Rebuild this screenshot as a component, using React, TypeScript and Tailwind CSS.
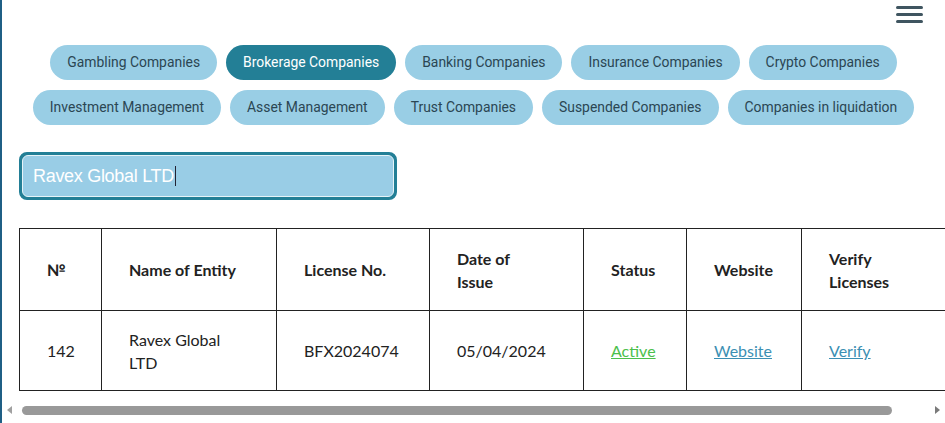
import React from "react";

const row1 = ["Gambling Companies", "Brokerage Companies", "Banking Companies", "Insurance Companies", "Crypto Companies"];
const row2 = ["Investment Management", "Asset Management", "Trust Companies", "Suspended Companies", "Companies in liquidation"];

function Pill({ label }: { label: string }) {
  const active = label === "Brokerage Companies";
  return (
    <div
      className={
        "h-[35px] px-[17px] rounded-full flex items-center text-[13.9px] whitespace-nowrap " +
        (active ? "bg-[#237f96] text-white" : "bg-[#99cee5] text-[#2b4653]")
      }
    >
      {label}
    </div>
  );
}

export default function App() {
  return (
    <div className="w-[945px] h-[423px] bg-white border-l-2 border-[#1f5f85] overflow-hidden relative" style={{ fontFamily: "Roboto, 'Liberation Sans', sans-serif" }}>
      <div className="flex justify-end pr-[22px] pt-[6px] h-[45px]">
        <div className="flex flex-col gap-[4.5px] w-[27px]">
          <div className="h-[2.5px] bg-[#3f5560] rounded" />
          <div className="h-[2.5px] bg-[#3f5560] rounded" />
          <div className="h-[2.5px] bg-[#3f5560] rounded" />
        </div>
      </div>
      <div className="flex flex-col items-center gap-[10px]">
        <div className="flex gap-[9px]">
          {row1.map((l) => (
            <Pill key={l} label={l} />
          ))}
        </div>
        <div className="flex gap-[9px]">
          {row2.map((l) => (
            <Pill key={l} label={l} />
          ))}
        </div>
      </div>
      <div className="pl-[17px] mt-[27px]">
        <div className="w-[378px] h-[48px] rounded-[8px] border-[3px] border-[#237f96] bg-[#237f96] p-0">
          <div className="w-full h-full rounded-[6px] border-[1.5px] border-[#e6f3f8] bg-[#99cde6] flex items-center pl-[10px]">
            <span className="text-white text-[18px] tracking-[-0.3px]" style={{ fontFamily: "'Liberation Sans', Arial, sans-serif" }}>
              Ravex Global LTD
            </span>
            <span className="w-[1px] h-[20px] bg-[#223] ml-[1px]" />
          </div>
        </div>
      </div>
      <div className="pl-[17px] mt-[28px] overflow-hidden" style={{ fontFamily: "Lato, 'Noto Sans', sans-serif" }}>
        <table className="border-collapse text-[16px] text-[#222] table-fixed w-[990px]">
          <colgroup>
            <col className="w-[82px]" />
            <col className="w-[175px]" />
            <col className="w-[153px]" />
            <col className="w-[154px]" />
            <col className="w-[103px]" />
            <col className="w-[115px]" />
            <col className="w-[208px]" />
          </colgroup>
          <thead>
            <tr className="h-[82px]">
              {["№", "Name of Entity", "License No.", "Date of Issue", "Status", "Website", "Verify Licenses"].map((h, i) => (
                <th
                  key={h}
                  className={
                    "border border-[#222] text-left font-bold pl-[27px] leading-[23px] align-middle " +
                    (i === 3 ? "pr-[60px]" : i === 6 ? "pr-[90px]" : "pr-[8px]")
                  }
                >
                  {h}
                </th>
              ))}
            </tr>
          </thead>
          <tbody>
            <tr className="h-[80px]">
              <td className="border border-[#222] pl-[27px]">142</td>
              <td className="border border-[#222] pl-[27px] pr-[36px] leading-[23px]">Ravex Global LTD</td>
              <td className="border border-[#222] pl-[27px]">BFX2024074</td>
              <td className="border border-[#222] pl-[27px]">05/04/2024</td>
              <td className="border border-[#222] pl-[27px]">
                <span className="text-[#4cc04c] underline">Active</span>
              </td>
              <td className="border border-[#222] pl-[27px]">
                <span className="text-[#3b8fb3] underline">Website</span>
              </td>
              <td className="border border-[#222] pl-[27px]">
                <span className="text-[#3b8fb3] underline">Verify</span>
              </td>
            </tr>
          </tbody>
        </table>
      </div>
      <div className="flex items-center h-[16px] mt-[11px] px-[5px]">
        <div className="w-0 h-0 border-y-[4px] border-y-transparent border-r-[5px] border-r-[#a0a0a0]" />
        <div className="flex-1 mx-[10px] h-[9px] flex">
          <div className="w-[870px] h-full rounded-full bg-[#999]" />
        </div>
        <div className="w-0 h-0 border-y-[4px] border-y-transparent border-l-[5px] border-l-[#7a7a7a]" />
      </div>
    </div>
  );
}
